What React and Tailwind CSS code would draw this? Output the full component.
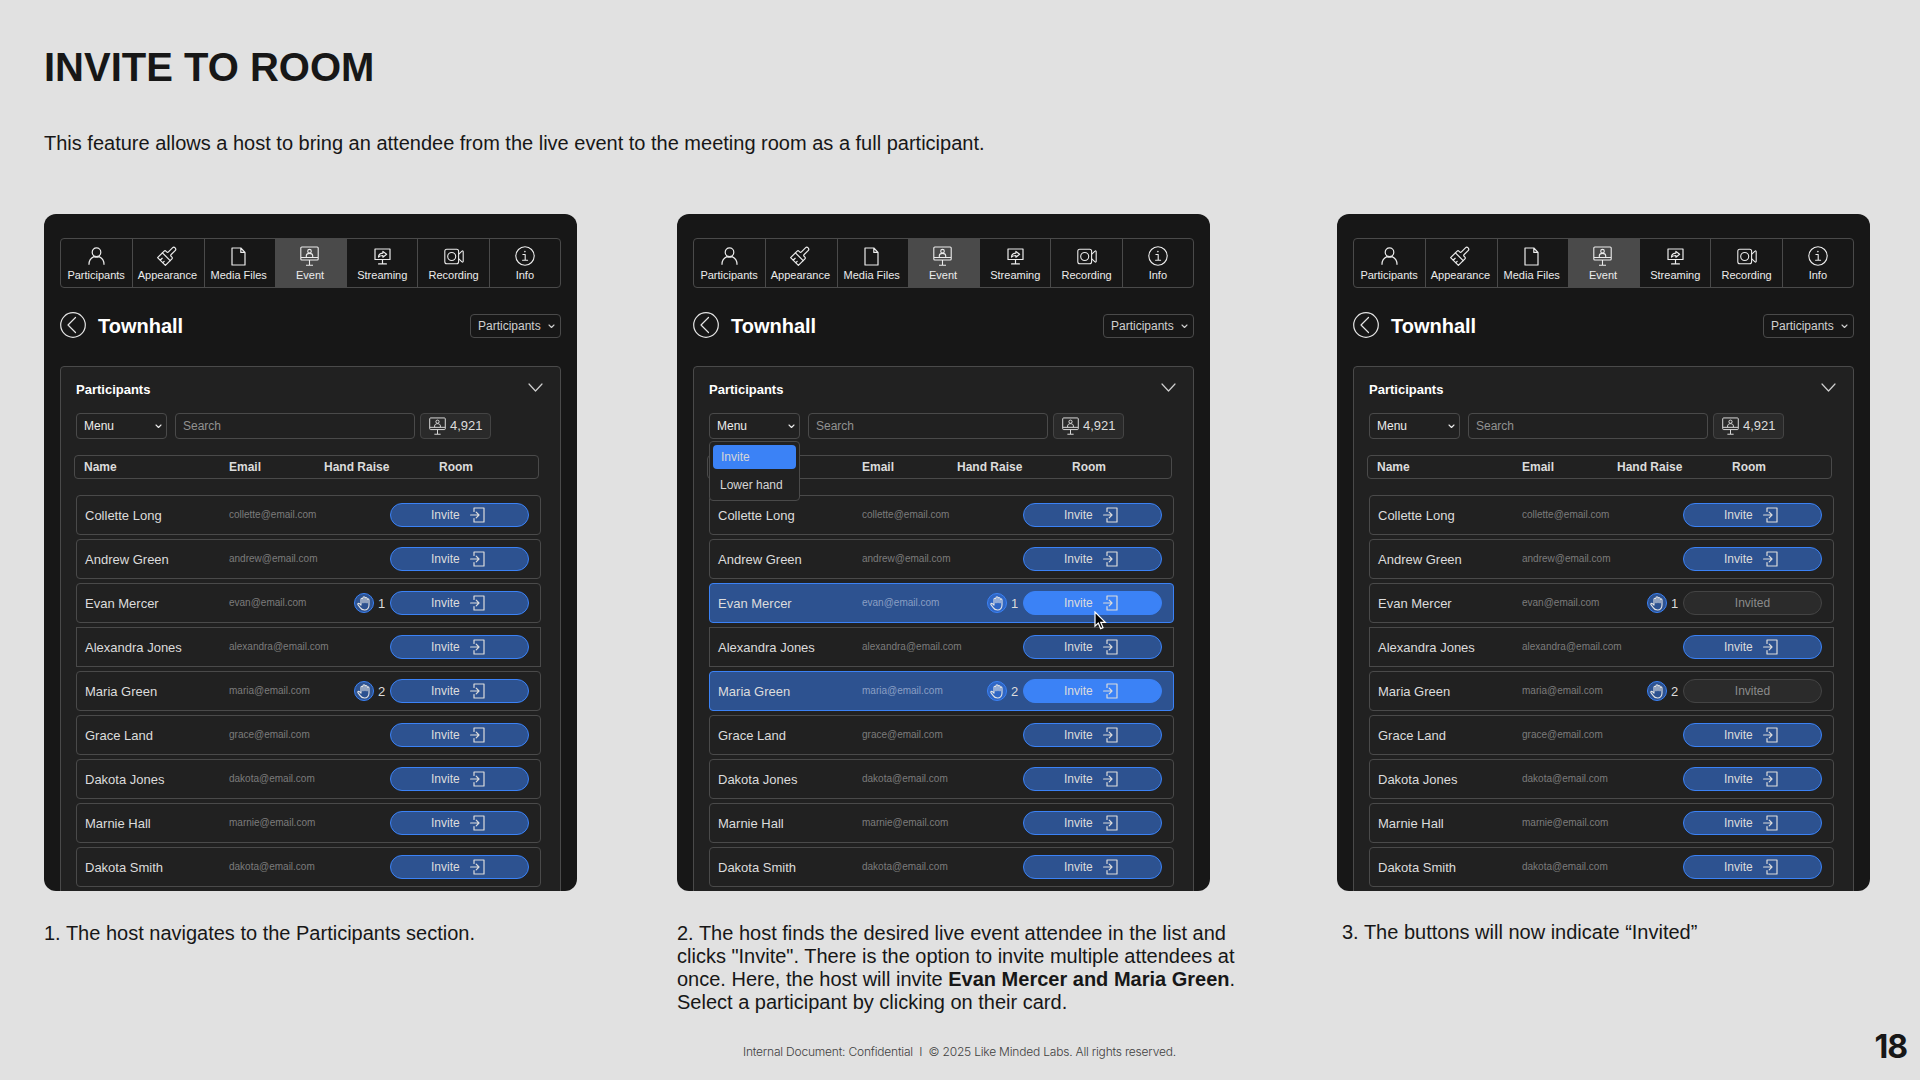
import React from 'react';
import clsx from 'clsx';

const PEOPLE = [
  { name: 'Collette Long', email: 'collette@email.com' },
  { name: 'Andrew Green', email: 'andrew@email.com' },
  { name: 'Evan Mercer', email: 'evan@email.com', hand: 1 },
  { name: 'Alexandra Jones', email: 'alexandra@email.com', square: true },
  { name: 'Maria Green', email: 'maria@email.com', hand: 2 },
  { name: 'Grace Land', email: 'grace@email.com' },
  { name: 'Dakota Jones', email: 'dakota@email.com' },
  { name: 'Marnie Hall', email: 'marnie@email.com' },
  { name: 'Dakota Smith', email: 'dakota@email.com' },
];

const TABS = [
  { label: 'Participants', icon: PersonIcon },
  { label: 'Appearance', icon: BrushIcon },
  { label: 'Media Files', icon: FileIcon },
  { label: 'Event', icon: EventIcon },
  { label: 'Streaming', icon: StreamIcon },
  { label: 'Recording', icon: RecordIcon },
  { label: 'Info', icon: InfoIcon },
];

function Svg({ w, h, sw = 1.2, className, children }) {
  return (
    <svg width={w} height={h} viewBox={`0 0 ${w} ${h}`} fill="none" stroke="currentColor"
      strokeWidth={sw} strokeLinecap="round" strokeLinejoin="round" className={clsx('shrink-0', className)}>
      {children}
    </svg>
  );
}

function PersonIcon() {
  return (
    <Svg w={17} h={18}>
      <circle cx="8.5" cy="5.2" r="4.3" />
      <path d="M1 17.3c0-3.6 1.9-6.3 4.9-7.7 1.7.7 3.5.7 5.2 0 3 1.4 4.9 4.1 4.9 7.7" />
    </Svg>
  );
}

function BrushIcon() {
  return (
    <Svg w={20} h={20}>
      <g transform="rotate(45 10 10)">
        <path d="M8.1 6V.4a1.9 1.9 0 0 1 3.8 0V6c0 .8.5 1.3 1.3 1.3h1.1a1.2 1.2 0 0 1 1.2 1.2v2.5h-11V8.5a1.2 1.2 0 0 1 1.2-1.2h1.1c.8 0 1.3-.5 1.3-1.3z" />
        <path d="M4.5 11v6.8h11V11M8.2 17.8v-2.8M11.8 17.8v-2" />
      </g>
    </Svg>
  );
}

function FileIcon() {
  return (
    <Svg w={15} h={19}>
      <path d="M1 1h8.8L14 5.4V18H1zM9.8 1v4.4H14" />
    </Svg>
  );
}

function EventIcon({ w = 19, h = 20 }) {
  return (
    <svg width={w} height={h} viewBox="0 0 19 20" fill="none" stroke="currentColor" strokeWidth="1.1" strokeLinejoin="round" className="shrink-0">
      <rect x=".8" y="1" width="17.4" height="13" rx="1" />
      <circle cx="9.5" cy="5.2" r="1.8" />
      <path d="M6.3 11.3V9.8c0-1.4 1.4-2.4 3.2-2.4s3.2 1 3.2 2.4v1.5M1 11.5h17M9.5 14v5M6 19.2h7" />
    </svg>
  );
}

function StreamIcon() {
  return (
    <Svg w={17} h={17}>
      <path d="M1 1h15v10.5H1zM8.5 11.5v4M4.6 15.9h7.8" />
      <path d="M4.5 9c.2-2.6 1.9-3.9 4.4-3.9V3.4l3.7 2.9-3.7 2.9V7.5C7 7.5 5.6 7.9 4.5 9z" />
    </Svg>
  );
}

function RecordIcon() {
  return (
    <Svg w={20} h={17} sw={1.1}>
      <rect x=".8" y="1.2" width="13.8" height="14.6" rx="2" />
      <circle cx="7.7" cy="8.5" r="4" />
      <path d="M14.8 6.2l3.2-3c.6-.5 1.2-.3 1.2.5v9.6c0 .8-.6 1-1.2.5l-3.2-3" />
    </Svg>
  );
}

function InfoIcon() {
  return (
    <Svg w={20} h={20} sw={1.1}>
      <circle cx="10" cy="10" r="9.2" />
      <path d="M7.9 8.5h2.3v5.8M7.6 14.3h5" />
      <circle cx="9.9" cy="5.6" r=".8" fill="currentColor" stroke="none" />
    </Svg>
  );
}

function EnterIcon() {
  return (
    <Svg w={15} h={16}>
      <path d="M4 4.5V1h10v14H4v-3.5M.6 8h8.2M6.2 5.2L9 8l-2.8 2.8" />
    </Svg>
  );
}

function HandIcon() {
  return (
    <Svg w={16} h={16} sw={1.1}>
      <path d="M5 9.8V4.3a1 1 0 0 1 2 0v3.5M7 7.6V2.7a1 1 0 0 1 2 0v4.9M9 3.5a1 1 0 0 1 2 0v4.3M11 4.9a1 1 0 0 1 2 0v5.1c0 3-1.7 5-4.5 5-2.2 0-3.4-.9-4.3-2.4L1.9 9.7c-.5-1 .7-1.8 1.5-1.1L5 10.2" />
    </Svg>
  );
}

function Caret() {
  return (
    <Svg w={7} h={5} sw={1.1}>
      <path d="M1 1l2.5 2.5L6 1" />
    </Svg>
  );
}

function HandBadge({ active }) {
  return (
    <span className={clsx('flex size-5 shrink-0 items-center justify-center rounded-full border border-[#3b82f6] text-[#e5e5e5]',
      active ? 'bg-[#2f66c4]' : 'bg-[#2d5290]')}>
      <HandIcon />
    </span>
  );
}

function RoomButton({ state }) {
  if (state === 'invited') {
    return (
      <span className="flex h-6 w-[139px] items-center justify-center rounded-full border border-[#444444] bg-[#2b2b2b] text-xs text-[#8a8a8a]">
        Invited
      </span>
    );
  }
  return (
    <span className={clsx('flex h-6 w-[139px] items-center gap-[10px] rounded-full border border-[#3b82f6] pl-10 text-xs text-[#dcdcdc]',
      state === 'selected' ? 'bg-[#3b82f6]' : 'bg-[#2d5290]')}>
      Invite
      <EnterIcon />
    </span>
  );
}

function PersonRow({ person, mode }) {
  const raised = Boolean(person.hand);
  const selected = raised && mode === 'select';
  const state = selected ? 'selected' : raised && mode === 'invited' ? 'invited' : 'idle';
  return (
    <div className={clsx('flex h-10 items-center border pl-2 pr-[11px]',
      !person.square && 'rounded',
      selected ? 'border-[#3b82f6] bg-[#2d5290]' : 'border-[#4a4a4a]')}>
      <span className="w-36 pt-px text-[13px] text-[#dcdcdc]">{person.name}</span>
      <span className={clsx('w-[125px] pb-px text-[10px]', selected ? 'text-[#8a9fc4]' : 'text-[#7c7c7c]')}>{person.email}</span>
      <span className="flex w-9 items-center gap-1 text-[13px] text-[#dcdcdc]">
        {raised && <><HandBadge active={selected} />{person.hand}</>}
      </span>
      <RoomButton state={state} />
    </div>
  );
}

function MenuSelect({ open }) {
  return (
    <div className="relative w-[91px]">
      <div className="flex h-[26px] items-center justify-between rounded border border-[#4a4a4a] pl-[7px] pr-1 text-xs text-[#ececec]">
        Menu
        <Caret />
      </div>
      {open && (
        <div className="absolute left-0 top-7 z-10 h-[60px] w-[91px] rounded border border-[#4a4a4a] bg-[#212121] p-[3px] text-xs text-[#d6d6d6]">
          <div className="flex h-6 items-center rounded bg-[#3b82f6] pl-2">Invite</div>
          <div className="mt-1 flex h-6 items-center pl-[7px]">Lower hand</div>
        </div>
      )}
    </div>
  );
}

function Screen({ mode }) {
  const menuOpen = mode === 'select';
  return (
    <div className="h-[677px] w-[533px] overflow-hidden rounded-xl bg-[#171717] px-4 pt-6">
      <div className="grid h-[50px] w-[501px] grid-cols-7 overflow-hidden rounded border border-[#4a4a4a] text-[11px] text-[#ececec]">
        {TABS.map(({ label, icon: Icon }, i) => (
          <div key={label} className={clsx('flex flex-col items-center border-l border-[#4a4a4a] pt-[7px] leading-3 first:border-l-transparent',
            i < 4 && 'pr-0.5',
            label === 'Event' && 'bg-[#4a4a4a]')}>
            <span className="flex h-5 items-center"><Icon /></span>
            <span className="mt-[3px] whitespace-nowrap">{label}</span>
          </div>
        ))}
      </div>

      <div className="mt-6 flex h-[26px] items-center">
        <Svg w={26} h={26} className="text-[#e5e5e5]">
          <circle cx="13" cy="13" r="12.3" />
          <path d="M15.5 5.5L8 13l7.5 7.5" />
        </Svg>
        <h2 className="ml-3 flex-1 pt-px text-[20px] font-bold leading-6 text-white">Townhall</h2>
        <div className="mt-0.5 flex h-6 w-[91px] items-center justify-between rounded border border-[#4a4a4a] pl-[7px] pr-[5px] text-xs text-[#d0d0d0]">
          Participants
          <Caret />
        </div>
      </div>

      <div className="mt-7 h-[560px] w-[501px] rounded border border-[#4a4a4a] bg-[#212121] px-[15px] pt-[10px]">
        <div className="flex h-6 items-center justify-between pr-0.5">
          <h3 className="text-[13px] font-bold text-white">Participants</h3>
          <Svg w={15} h={9} className="mb-[3px] text-[#d0d0d0]">
            <path d="M1 1l6.5 7L14 1" />
          </Svg>
        </div>

        <div className="mt-3 flex">
          <MenuSelect open={menuOpen} />
          <div className="ml-2 flex h-[26px] w-60 items-center rounded border border-[#4a4a4a] pl-[7px] text-xs text-[#919191]">Search</div>
          <div className="ml-[5px] flex h-[26px] w-[71px] items-center gap-1 rounded border border-[#444444] bg-[#2a2a2a] pl-2 text-[13px] text-[#dcdcdc]">
            <EventIcon w={17} h={18} />
            <span className="pb-px">4,921</span>
          </div>
        </div>

        <div className="-ml-0.5 mt-4 flex h-6 w-[465px] items-center rounded border border-[#4a4a4a] pl-[9px] text-xs font-bold text-[#dcdcdc]">
          <span className="w-[145px]">{!menuOpen && 'Name'}</span>
          <span className="w-[95px]">Email</span>
          <span className="w-[115px]">Hand Raise</span>
          <span>Room</span>
        </div>

        <div className="mt-4 flex gap-1">
          <div className="flex w-[465px] flex-col gap-1">
            {PEOPLE.map((p) => <PersonRow key={p.name} person={p} mode={mode} />)}
          </div>
          <div className="h-[164px] w-1 rounded-full bg-[#4a4a4a]" />
        </div>
      </div>
    </div>
  );
}

function Cursor() {
  return (
    <svg width="13" height="20" viewBox="0 0 13 20" className="absolute left-[417px] top-[397px]">
      <path d="M1 1v14.2l3.3-3.1 2.3 5.5 2.4-1-2.3-5.3h4.6z" fill="#000" stroke="#fff" strokeWidth="1.2" />
    </svg>
  );
}

export default function App() {
  return (
    <main className="flex h-[1080px] w-[1920px] flex-col overflow-hidden bg-[#e1e1e1] font-['Liberation_Sans',Arial,sans-serif] text-[#171717]">
      <header className="h-[214px] pl-11 pt-11">
        <h1 className="text-[40px] font-bold leading-[46px]">INVITE TO ROOM</h1>
        <p className="mt-[41px] text-[20px] leading-6">
          This feature allows a host to bring an attendee from the live event to the meeting room as a full participant.
        </p>
      </header>

      <div className="flex h-[806px] pl-11 text-[20px] leading-[23px]">
        <section className="w-[633px]">
          <Screen mode="idle" />
          <p className="mt-[31px]">1. The host navigates to the Participants section.</p>
        </section>
        <section className="relative w-[660px]">
          <Screen mode="select" />
          <Cursor />
          <p className="mt-[31px] whitespace-nowrap">
            2. The host finds the desired live event attendee in the list and<br />
            clicks "Invite". There is the option to invite multiple attendees at<br />
            once. Here, the host will invite <b>Evan Mercer and Maria Green</b>.<br />
            Select a participant by clicking on their card.
          </p>
        </section>
        <section>
          <Screen mode="invited" />
          <p className="ml-[5px] mt-[30px]">3. The buttons will now indicate “Invited”</p>
        </section>
      </div>

      <footer className="grid grid-cols-[743px_1fr_auto] items-start pr-[13px] font-['Inter',sans-serif]">
        <p className="col-start-2 mt-[22px] whitespace-pre text-[12px] font-light leading-5 tracking-[-0.2px] text-[#3f3f3f]">
          {'Internal Document: Confidential  I  © 2025 Like Minded Labs. All rights reserved.'}
        </p>
        <span className="mt-[2px] text-[32px] font-bold leading-[50px] tracking-[-1px]">18</span>
      </footer>
    </main>
  );
}
